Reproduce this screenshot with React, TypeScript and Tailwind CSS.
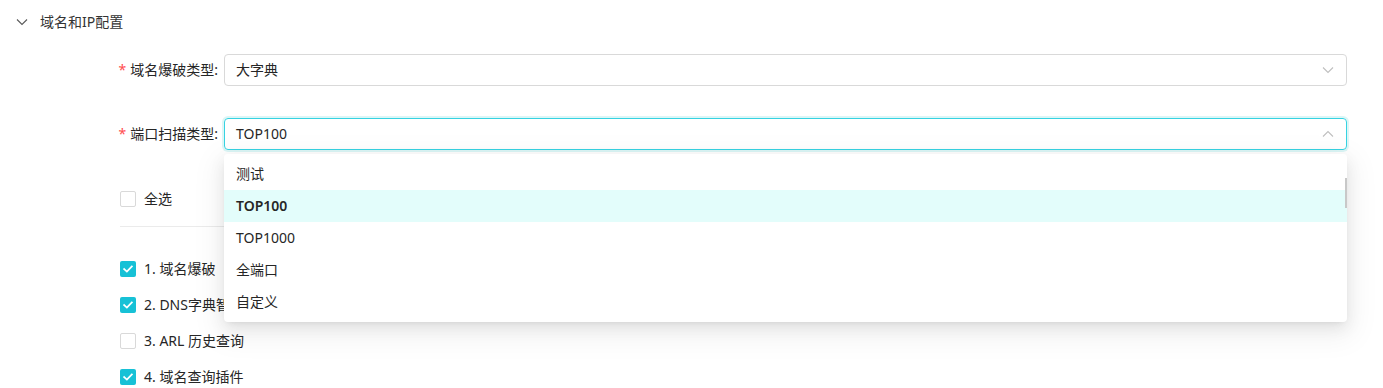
import React from "react";

const Check = ({ checked, label }: { checked: boolean; label: string }) => (
  <div className="flex items-center h-[22px]">
    {checked ? (
      <span className="w-[16px] h-[16px] shrink-0 rounded-[2px] bg-[#17c1d6] flex items-center justify-center">
        <svg width="10" height="8" viewBox="0 0 10 8">
          <path d="M1.2 4.1 L3.9 6.6 L8.8 1.4" fill="none" stroke="#fff" strokeWidth="1.8" strokeLinecap="square" />
        </svg>
      </span>
    ) : (
      <span className="w-[16px] h-[16px] shrink-0 rounded-[2px] border border-[#d9d9d9] bg-white" />
    )}
    <span className="ml-[8px] text-[14px] leading-[22px] text-[#262626] whitespace-nowrap">{label}</span>
  </div>
);

const Chevron = ({ up, dark }: { up?: boolean; dark?: boolean }) => (
  <svg width="12" height="8" viewBox="0 0 12 8" className={dark ? "text-[#595959]" : "text-[#bfbfbf]"}>
    <path d={up ? "M1 6.5 L6 1.5 L11 6.5" : "M1 1.5 L6 6.5 L11 1.5"} fill="none" stroke="currentColor" strokeWidth="1.1" />
  </svg>
);

export default function App() {
  return (
    <div
      className="relative w-[1383px] h-[388px] overflow-hidden bg-white text-[#262626] leading-[22px]"
      style={{ fontFamily: '"Noto Sans", "Noto Sans CJK SC", sans-serif' }}
    >
      <div className="flex items-center h-[44px] pl-[16px]">
        <Chevron dark />
        <span className="ml-[12px] text-[14px] leading-[22px] text-[#333]">域名和IP配置</span>
      </div>

      <div className="flex items-center mt-[10px]">
        <div className="w-[224px] pr-[6px] flex justify-end items-center text-[14px]">
          <span className="text-[#ff4d4f] mr-[4px] text-[14px]">*</span>
          <span>域名爆破类型:</span>
        </div>
        <div className="w-[1123px] h-[32px] border border-[#d9d9d9] rounded-[4px] flex items-center justify-between pl-[11px] pr-[12px]">
          <span className="text-[14px]">大字典</span>
          <Chevron />
        </div>
      </div>

      <div className="flex items-center mt-[32px]">
        <div className="w-[224px] pr-[6px] flex justify-end items-center text-[14px]">
          <span className="text-[#ff4d4f] mr-[4px] text-[14px]">*</span>
          <span>端口扫描类型:</span>
        </div>
        <div className="w-[1123px] h-[32px] border border-[#36d3e2] rounded-[4px] shadow-[0_0_0_2px_rgba(19,194,194,0.15)] flex items-center justify-between pl-[11px] pr-[12px]">
          <span className="text-[14px]">TOP100</span>
          <Chevron up />
        </div>
      </div>

      <div className="pl-[120px] pr-[36px]">
        <div className="mt-[38px]">
          <Check checked={false} label="全选" />
        </div>
        <div className="mt-[16px] h-px bg-[#ebebeb]" />
        <div className="mt-[31px] flex flex-col gap-[14px]">
          <Check checked label="1. 域名爆破" />
          <Check checked label="2. DNS字典智能生成" />
          <Check checked={false} label="3. ARL 历史查询" />
          <Check checked label="4. 域名查询插件" />
        </div>
      </div>

      <div className="absolute left-[224px] top-[154px] w-[1123px] bg-white rounded-[4px] py-[4px] shadow-[0_3px_6px_-4px_rgba(0,0,0,0.12),0_6px_16px_0_rgba(0,0,0,0.08),0_9px_28px_8px_rgba(0,0,0,0.05)]">
        {[
          { t: "测试" },
          { t: "TOP100", sel: true },
          { t: "TOP1000" },
          { t: "全端口" },
          { t: "自定义" },
        ].map((o) => (
          <div
            key={o.t}
            className={
              "h-[32px] flex items-center px-[12px] text-[14px] " +
              (o.sel ? "bg-[#e3fdfb] font-semibold text-[#262626]" : "text-[#262626]")
            }
          >
            {o.t}
          </div>
        ))}
        <div className="absolute right-0 top-[24px] w-[2px] h-[30px] bg-[#c8c8c8]" />
      </div>
    </div>
  );
}
